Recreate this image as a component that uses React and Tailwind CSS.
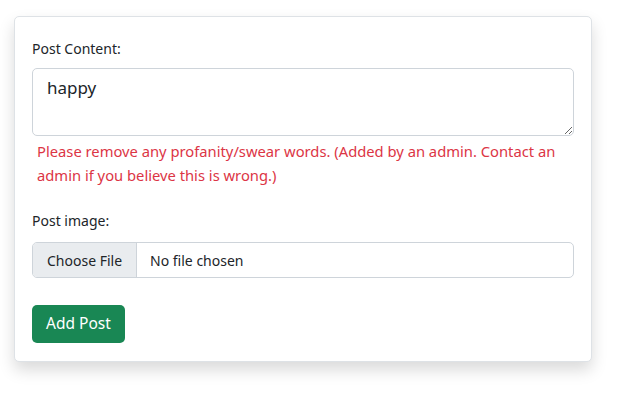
import React from 'react';

const App = () => {
  return (
    <div className="min-h-screen bg-white pt-4 pl-[14px] font-['Noto_Sans',sans-serif]">
      <div className="w-[578px] rounded-[5px] border border-[#dee2e6] bg-white px-[17px] pt-[22px] pb-[18px] shadow-[0_8px_16px_rgba(0,0,0,0.15)]">
        <label className="block text-[14px] leading-5 text-[#212529]">Post Content:</label>
        <textarea
          defaultValue="happy"
          className="mt-[9px] block h-[68px] w-full rounded-[5px] border border-[#ced4da] px-[14px] py-[7px] text-[17px] leading-6 text-[#212529] outline-none"
        />
        <p className="mt-[3px] pl-[5px] text-[14.75px] leading-6 text-[#dc3545]">
          Please remove any profanity/swear words. (Added by an admin. Contact an admin if you believe this is wrong.)
        </p>
        <label className="mt-[24px] block text-[14px] leading-5 text-[#212529]">Post image:</label>
        <div className="mt-[11px] flex h-[36px] w-full overflow-hidden rounded-[5px] border border-[#ced4da] text-[14px] text-[#212529]">
          <div className="flex items-center border-r border-[#ced4da] bg-[#e9ecef] px-[14px]">Choose File</div>
          <div className="flex items-center px-[13px]">No file chosen</div>
        </div>
        <button className="mt-[27px] h-[38px] rounded-[5px] bg-[#198754] px-[14px] text-[15.5px] text-white">Add Post</button>
      </div>
    </div>
  );
};

export default App;
